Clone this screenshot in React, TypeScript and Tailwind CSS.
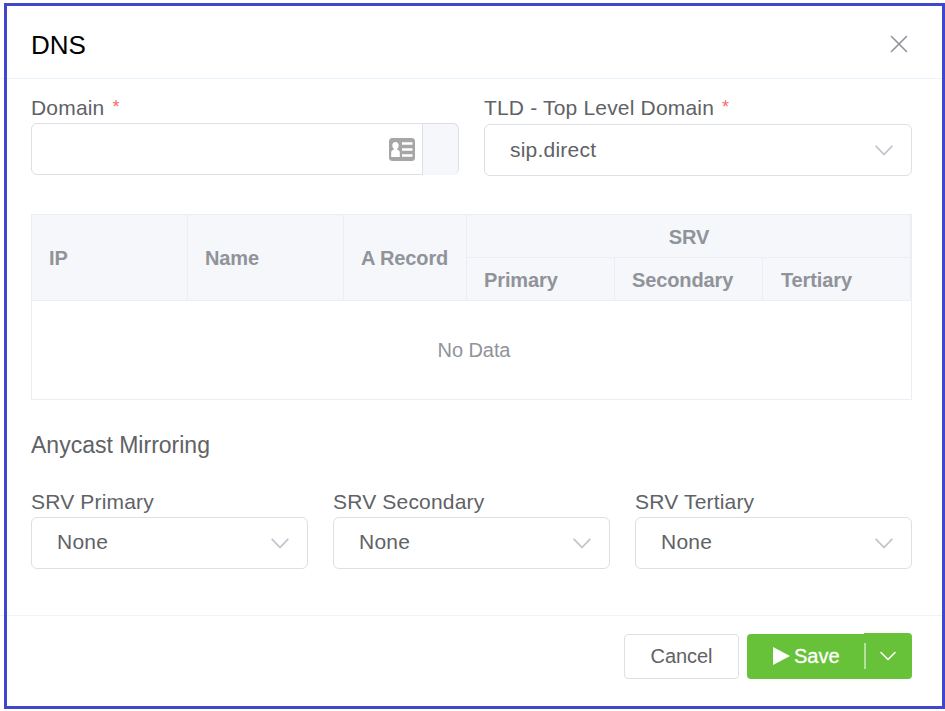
import React from "react";

function Chevron({ className = "" }: { className?: string }) {
  return (
    <svg className={className} width="20" height="12" viewBox="0 0 20 12" fill="none" stroke="currentColor">
      <path d="M2.200 1.300 L10 9.500 L17.800 1.300" strokeWidth="1.800" strokeLinecap="round" strokeLinejoin="round" />
    </svg>
  );
}

function Label({ text, required = false }: { text: string; required?: boolean }) {
  return (
    <div className="flex h-6 items-start whitespace-nowrap text-[21px] leading-6 tracking-[0.18px] text-[#606266]">
      {text}
      {required && <span className="ml-2 text-lg leading-[22px] text-[#f56c6c]">*</span>}
    </div>
  );
}

function Select({ value, textClass = "pb-0.5" }: { value: string; textClass?: string }) {
  return (
    <div className="flex h-[52px] items-center justify-between rounded-md border border-[#dcdfe6] bg-white pr-[17px] pl-[25px]">
      <span className={"text-[21px] leading-6 tracking-[0.22px] text-[#606266] " + textClass}>{value}</span>
      <Chevron className="mt-px text-[#c0c4cc]" />
    </div>
  );
}

function ContactIcon() {
  return (
    <svg width="26" height="23" viewBox="0 0 26 23">
      <rect width="26" height="23" rx="3.500" fill="#a6a6a6" />
      <path
        fill="#fff"
        d="M6.500 4c2 0 3.200 1.300 3.200 3.300 0 1.500-.6 2.700-1.400 3.500v1c1.700.5 2.500 1.200 2.500 3V19H2.200v-4.200c0-1.800.8-2.500 2.500-3v-1C3.900 10 3.300 8.800 3.300 7.300 3.300 5.300 4.500 4 6.500 4z"
      />
      <path d="M13 5.500h10.500M13 11.500h10.500M13 17.500h10.500" stroke="#fff" strokeWidth="2.600" />
    </svg>
  );
}

const headCell = "border-r border-b border-[#ebeef5] pl-[17px] flex items-center";

export default function App() {
  return (
    <div className="relative flex h-[711px] w-[945px] flex-col overflow-hidden bg-white font-['Liberation_Sans',Arial,sans-serif]">
      <header className="flex h-[79px] shrink-0 items-center justify-between border-b border-[#ebf5fd] pt-[10px] pr-[37px] pl-[31px]">
        <h1 className="pt-px text-[26px] leading-8 text-black">DNS</h1>
        <svg width="18" height="18" viewBox="0 0 18 18" stroke="#909399" strokeWidth="1.600" strokeLinecap="round">
          <path d="M1.500 1.500 L16.500 16.500 M16.500 1.500 L1.500 16.500" />
        </svg>
      </header>

      <main className="flex h-[536px] shrink-0 flex-col pr-[33px] pl-[31px]">
        <div className="flex gap-[25px] pt-[17px]">
          <div className="w-[428px]">
            <Label text="Domain" required />
            <div className="mt-[3px] flex h-[52px]">
              <div className="flex flex-1 items-center justify-end rounded-l-md border border-[#dcdfe6] pr-[7px]">
                <ContactIcon />
              </div>
              <div className="w-9 rounded-r-md border-t border-r border-[#dcdfe6] bg-[#f5f7fa]" />
            </div>
          </div>
          <div className="w-[428px]">
            <Label text="TLD - Top Level Domain" required />
            <div className="mt-1">
              <Select value="sip.direct" textClass="pb-0" />
            </div>
          </div>
        </div>

        <section className="mt-[38px] h-[186px] w-[881px] border border-[#ebeef5] text-xl leading-6">
          <div className="grid h-[86px] grid-cols-[156px_156px_123px_148px_148px_148px] grid-rows-[43px_43px] bg-[#f5f7fa] font-bold tracking-[-0.12px] text-[#909399]">
            <div className={headCell + " row-span-2"}>IP</div>
            <div className={headCell + " row-span-2"}>Name</div>
            <div className={headCell + " row-span-2"}>A Record</div>
            <div className="col-span-3 flex items-center justify-center border-r border-b border-[#ebeef5] pt-px pl-px">SRV</div>
            <div className={headCell + " pt-0.5"}>Primary</div>
            <div className={headCell + " pt-0.5"}>Secondary</div>
            <div className="flex items-center border-r border-b border-[#ebeef5] pt-0.5 pl-[18px]">Tertiary</div>
          </div>
          <div className="flex h-[98px] items-center justify-center pl-[5px] tracking-[-0.08px] text-[#909399]">No Data</div>
        </section>

        <h2 className="mt-[31px] text-[23px] leading-7 text-[#606266]">Anycast Mirroring</h2>

        <div className="mt-[31px] grid grid-cols-[277px_277px_277px] gap-x-[25px]">
          {["SRV Primary", "SRV Secondary", "SRV Tertiary"].map((name) => (
            <div key={name}>
              <Label text={name} />
              <div className="mt-[3px]">
                <Select value="None" />
              </div>
            </div>
          ))}
        </div>
      </main>

      <footer className="flex flex-1 items-start justify-end gap-2 border-t border-[#ebf5fd] pt-[17px] pr-[33px] text-xl leading-6">
        <button className="mt-px flex h-[45px] w-[115px] items-center justify-center rounded border border-[#dcdfe6] bg-white pb-0.5 tracking-[-0.08px] text-[#606266]">
          Cancel
        </button>
        <div className="flex w-[165px] items-end text-white">
          <button className="flex h-[45px] flex-1 items-center rounded-l bg-[#67c23a] pb-0.5 pl-[26px]">
            <svg width="17" height="18" viewBox="0 0 17 18" fill="currentColor">
              <path d="M0 0 L17 9 L0 18 Z" />
            </svg>
            <span className="ml-1 [-webkit-text-stroke:0.3px_white]">Save</span>
          </button>
          <button className="flex h-[46px] w-12 items-center rounded-r bg-[#67c23a]">
            <span className="h-[26px] w-0.5 bg-white/50" />
            <svg className="ml-[13px]" width="18" height="12" viewBox="0 0 18 12" fill="none" stroke="currentColor">
              <path d="M2 2.500 L9 9.500 L16 2.500" strokeWidth="1.600" strokeLinecap="round" strokeLinejoin="round" />
            </svg>
          </button>
        </div>
      </footer>

      <div className="pointer-events-none absolute top-[3px] right-0 bottom-[2px] left-1 border-[3px] border-[#3f48cc]" />
    </div>
  );
}
